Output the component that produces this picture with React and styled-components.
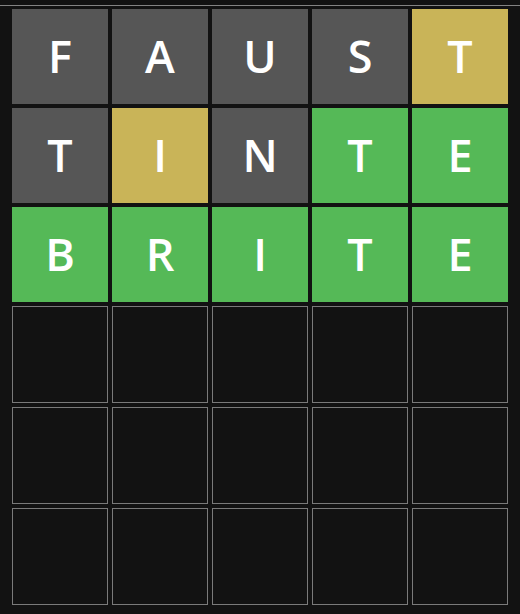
import styled, { createGlobalStyle } from "styled-components";

const GlobalStyle = createGlobalStyle`
  body {
    margin: 0;
    background: #121212;
    font-family: "Open Sans", "DejaVu Sans", sans-serif;
  }
`;

const guesses = [
  { word: "FAUST", marks: "aaaap" },
  { word: "TINTE", marks: "apacc" },
  { word: "BRITE", marks: "ccccc" },
];

const ROWS = 6;

const colors = {
  c: "#55b957",
  p: "#c9b458",
  a: "#565656",
};

const Page = styled.div`
  width: 520px;
  height: 614px;
  overflow: hidden;
`;

const TopBar = styled.div`
  height: 5px;
  border-bottom: 1px solid #838383;
`;

const Board = styled.div`
  display: grid;
  grid-template-columns: repeat(5, 96px);
  gap: 4px;
  padding: 3px 12px 0;
`;

// filled tiles sit a touch shorter than the outlined empty ones
const Tile = styled.div`
  box-sizing: border-box;
  height: ${(p) => (p.$mark ? "95px" : "97px")};
  display: flex;
  align-items: center;
  justify-content: center;
  background: ${(p) => (p.$mark ? colors[p.$mark] : "#121212")};
  border: ${(p) => (p.$mark ? "none" : "1px solid #7a7a7a")};
  color: #fff;
  font-size: 45px;
  font-weight: 600;
  line-height: 1;
  padding-bottom: 2px;
`;

const App = () => {
  const rows = [];
  for (let r = 0; r < ROWS; r++) {
    const g = guesses[r];
    for (let c = 0; c < 5; c++) {
      rows.push(
        <Tile key={`${r}-${c}`} $mark={g ? g.marks[c] : null}>
          {g ? g.word[c] : ""}
        </Tile>
      );
    }
  }

  return (
    <Page>
      <GlobalStyle />
      <TopBar />
      <Board>{rows}</Board>
    </Page>
  );
};

export default App;
